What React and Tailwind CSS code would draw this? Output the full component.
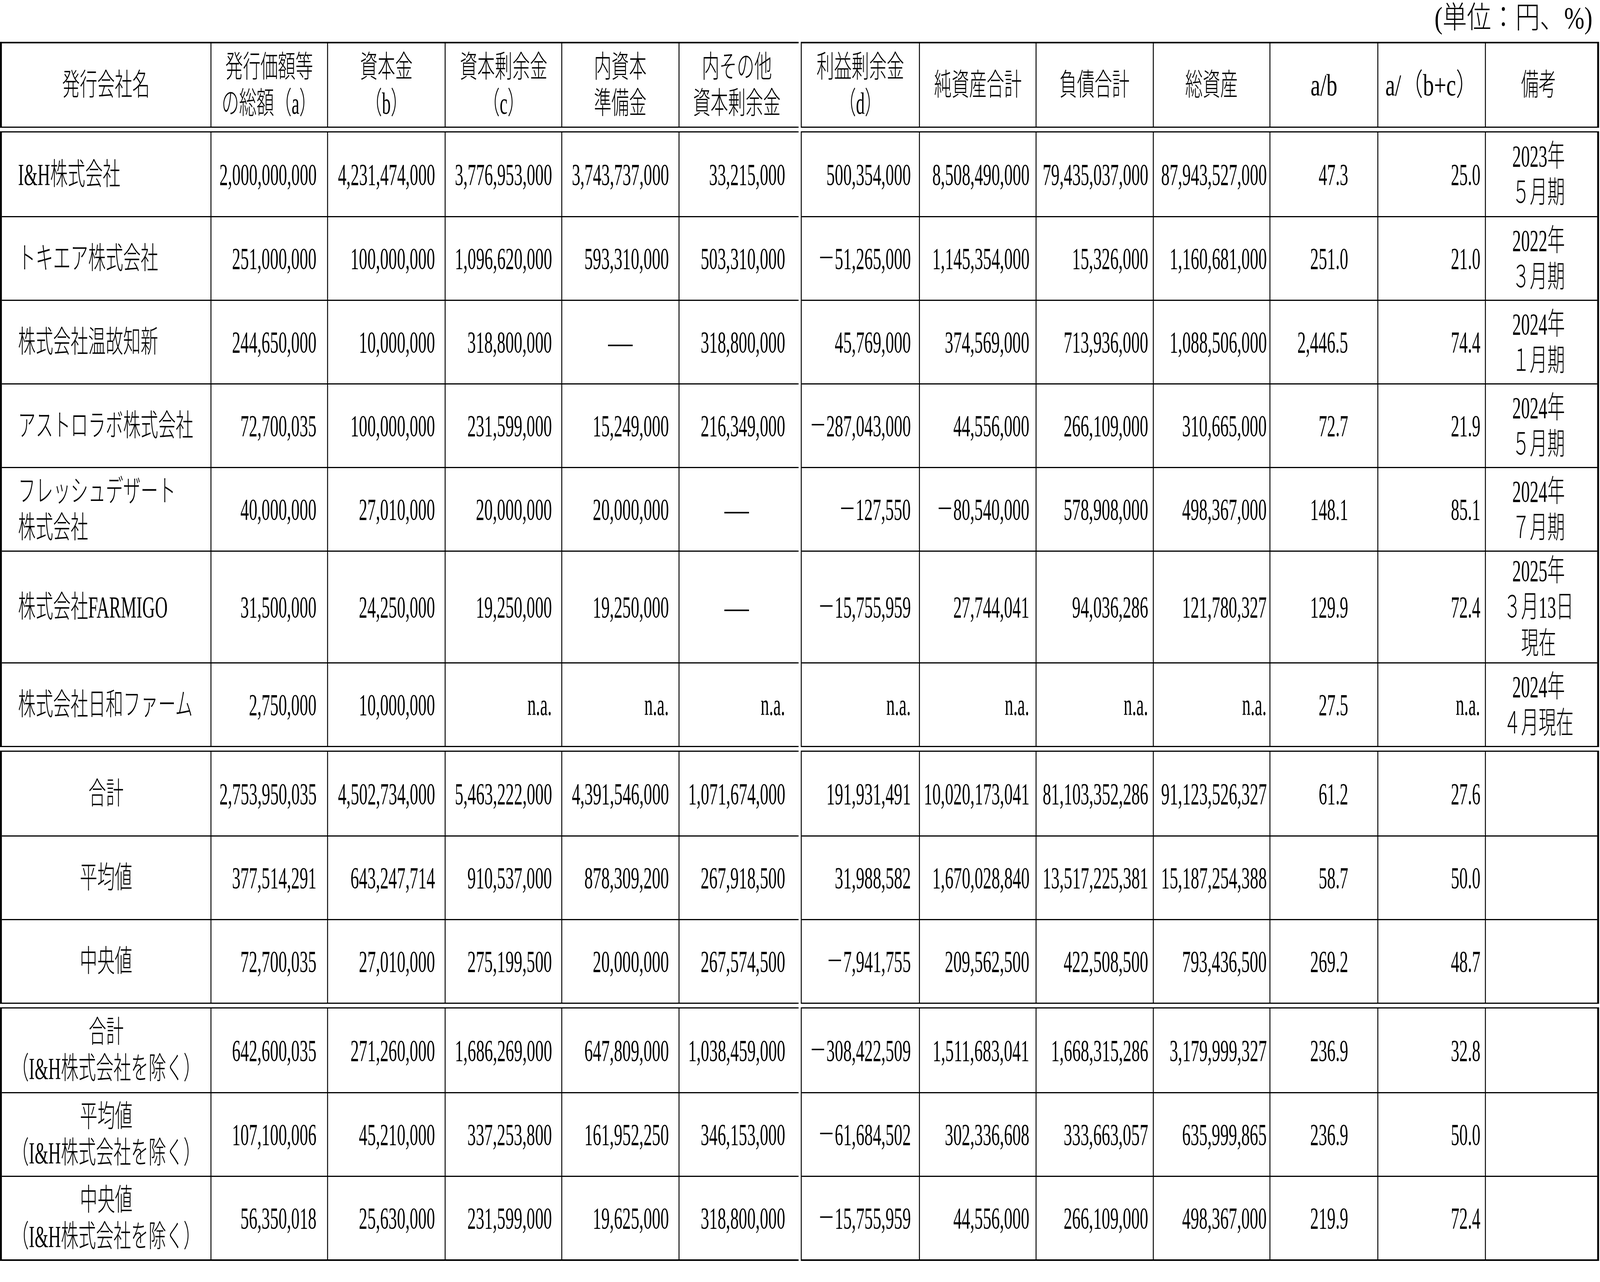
import React from "react";
import clsx from "clsx";

// column widths (px) of the two side-by-side tables
const leftW = ["w-[669px]", "w-[374px]", "w-[377px]", "w-[374px]", "w-[376px]", "w-[370px]"];
const rightW = ["w-[376px]", "w-[374px]", "w-[376px]", "w-[374px]", "w-[346px]", "w-[345px]", "w-[342px]"];

// right padding of each value column (c2 .. c12)
const valPad = [
  "pr-[34px]",
  "pr-[31px]",
  "pr-[30px]",
  "pr-[31px]",
  "pr-[28px]",
  "pr-[26px]",
  "pr-[20px]",
  "pr-[15px]",
  "pr-[9px]",
  "pr-[94px]",
  "pr-[15px]",
];

const header = {
  h: "h-[213px]",
  left: [["発行会社名"], ["発行価額等", "の総額（a）"], ["資本金", "（b）"], ["資本剰余金", "（c）"], ["内資本", "準備金"], ["内その他", "資本剰余金"]],
  right: [["利益剰余金", "（d）"], ["純資産合計"], ["負債合計"], ["総資産"], ["a/b"], ["a/（b+c）"], ["備考"]],
};

const companies = [
  {
    name: ["I&H株式会社"],
    v: ["2,000,000,000", "4,231,474,000", "3,776,953,000", "3,743,737,000", "33,215,000", "500,354,000", "8,508,490,000", "79,435,037,000", "87,943,527,000", "47.3", "25.0"],
    note: ["2023年", "５月期"],
  },
  {
    name: ["トキエア株式会社"],
    v: ["251,000,000", "100,000,000", "1,096,620,000", "593,310,000", "503,310,000", "－51,265,000", "1,145,354,000", "15,326,000", "1,160,681,000", "251.0", "21.0"],
    note: ["2022年", "３月期"],
  },
  {
    name: ["株式会社温故知新"],
    v: ["244,650,000", "10,000,000", "318,800,000", "―", "318,800,000", "45,769,000", "374,569,000", "713,936,000", "1,088,506,000", "2,446.5", "74.4"],
    note: ["2024年", "１月期"],
  },
  {
    name: ["アストロラボ株式会社"],
    v: ["72,700,035", "100,000,000", "231,599,000", "15,249,000", "216,349,000", "－287,043,000", "44,556,000", "266,109,000", "310,665,000", "72.7", "21.9"],
    note: ["2024年", "５月期"],
  },
  {
    name: ["フレッシュデザート", "株式会社"],
    v: ["40,000,000", "27,010,000", "20,000,000", "20,000,000", "―", "－127,550", "－80,540,000", "578,908,000", "498,367,000", "148.1", "85.1"],
    note: ["2024年", "７月期"],
  },
  {
    name: ["株式会社FARMIGO"],
    v: ["31,500,000", "24,250,000", "19,250,000", "19,250,000", "―", "－15,755,959", "27,744,041", "94,036,286", "121,780,327", "129.9", "72.4"],
    note: ["2025年", "３月13日", "現在"],
    h: "h-[286px]",
  },
  {
    name: ["株式会社日和ファーム"],
    v: ["2,750,000", "10,000,000", "n.a.", "n.a.", "n.a.", "n.a.", "n.a.", "n.a.", "n.a.", "27.5", "n.a."],
    note: ["2024年", "４月現在"],
  },
];

const totals = [
  {
    label: ["合計"],
    v: ["2,753,950,035", "4,502,734,000", "5,463,222,000", "4,391,546,000", "1,071,674,000", "191,931,491", "10,020,173,041", "81,103,352,286", "91,123,526,327", "61.2", "27.6"],
  },
  {
    label: ["平均値"],
    v: ["377,514,291", "643,247,714", "910,537,000", "878,309,200", "267,918,500", "31,988,582", "1,670,028,840", "13,517,225,381", "15,187,254,388", "58.7", "50.0"],
  },
  {
    label: ["中央値"],
    v: ["72,700,035", "27,010,000", "275,199,500", "20,000,000", "267,574,500", "－7,941,755", "209,562,500", "422,508,500", "793,436,500", "269.2", "48.7"],
  },
];

const excl = [
  {
    label: ["合計", "（I&H株式会社を除く）"],
    v: ["642,600,035", "271,260,000", "1,686,269,000", "647,809,000", "1,038,459,000", "－308,422,509", "1,511,683,041", "1,668,315,286", "3,179,999,327", "236.9", "32.8"],
  },
  {
    label: ["平均値", "（I&H株式会社を除く）"],
    v: ["107,100,006", "45,210,000", "337,253,800", "161,952,250", "346,153,000", "－61,684,502", "302,336,608", "333,663,057", "635,999,865", "236.9", "50.0"],
  },
  {
    label: ["中央値", "（I&H株式会社を除く）"],
    v: ["56,350,018", "25,630,000", "231,599,000", "19,625,000", "318,800,000", "－15,755,959", "44,556,000", "266,109,000", "498,367,000", "219.9", "72.4"],
  },
];

const Lines = ({ lines, origin = "origin-center", center = true, wide = false }) => (
  <div
    className={clsx(
      "whitespace-nowrap leading-[93px]",
      wide ? "scale-x-[0.9]" : "scale-x-[0.72]",
      origin,
      center && "text-center"
    )}
  >
    {lines.map((l, i) => (
      <div key={i}>{l}</div>
    ))}
  </div>
);

const Value = ({ v }) => {
  if (v === "―") return <span className="leading-[93px]">―</span>;
  return <span className="inline-block origin-right scale-x-[0.695] whitespace-nowrap leading-[93px]">{v}</span>;
};

const Cell = ({ w, first, className, children }) => (
  <div className={clsx("flex flex-none items-center", w, !first && "border-l-[3px] border-black", className)}>{children}</div>
);

// one row split into its left-table part and right-table part
const rowParts = (row) => {
  const h = row.h || "h-[214px]";
  if (row.header) {
    return {
      h,
      left: row.left.map((lines, i) => (
        <Cell key={i} w={leftW[i]} first={i === 0} className="justify-center">
          <Lines lines={lines} />
        </Cell>
      )),
      right: row.right.map((lines, i) => (
        <Cell key={i} w={rightW[i]} first={i === 0} className="justify-center">
          <Lines lines={lines} wide={i === 4 || i === 5} />
        </Cell>
      )),
    };
  }
  const first = row.name ? (
    <Cell key="n" w={leftW[0]} first className="justify-start pl-[52px]">
      <Lines lines={row.name} origin="origin-left" center={false} />
    </Cell>
  ) : (
    <Cell key="n" w={leftW[0]} first className="justify-center">
      <Lines lines={row.label} />
    </Cell>
  );
  const cells = row.v.map((v, i) => {
    const widths = i < 5 ? leftW[i + 1] : rightW[i - 5];
    return (
      <Cell key={i} w={widths} first={i === 5} className={v === "―" ? "justify-center" : clsx("justify-end", valPad[i])}>
        <Value v={v} />
      </Cell>
    );
  });
  const note = (
    <Cell key="note" w={rightW[6]} className="justify-center">
      {row.note && <Lines lines={row.note} />}
    </Cell>
  );
  return { h, left: [first, ...cells.slice(0, 5)], right: [...cells.slice(5), note] };
};

const Block = ({ rows, top = "border-t-[3px]", bottom = "border-b-[3px]" }) => {
  const parts = rows.map(rowParts);
  return (
    <div className="flex gap-[7px]">
      <div className={clsx("w-[2561px] border-l-[6px] border-black", top, bottom)}>
        {parts.map((p, i) => (
          <div key={i} className={clsx("flex", p.h, i > 0 && "border-t-[3px] border-black")}>
            {p.left}
          </div>
        ))}
      </div>
      <div className={clsx("w-[2560px] border-l-[3px] border-r-[6px] border-black", top, bottom)}>
        {parts.map((p, i) => (
          <div key={i} className={clsx("flex", p.h, i > 0 && "border-t-[3px] border-black")}>
            {p.right}
          </div>
        ))}
      </div>
    </div>
  );
};

export default function App() {
  // the sheet is drawn on a 5131x3281 page; fit that page to the real window
  const hasWin = typeof window !== "undefined";
  const sx = hasWin && window.innerWidth ? window.innerWidth / 5131 : 1;
  const sy = hasWin && window.innerHeight ? window.innerHeight / 3281 : 1;

  return (
    <div className="h-screen w-screen overflow-hidden bg-white">
      <div
        className="h-[3281px] w-[5131px] origin-top-left font-['Liberation_Serif','Noto_Sans_CJK_JP',serif] text-[78px] font-light text-black"
        style={{ transform: `scale(${sx}, ${sy})` }}
      >
        <div className="flex h-[107px] justify-end pr-[24px]">
          <span className="leading-[92px]">(単位：円、%)</span>
        </div>
        <div className="flex flex-col gap-[9px]">
          <Block rows={[{ header: true, ...header }]} top="border-t-[4px]" />
          <Block rows={companies} />
          <Block rows={totals} />
          <Block rows={excl} bottom="border-b-[4px]" />
        </div>
      </div>
    </div>
  );
}
